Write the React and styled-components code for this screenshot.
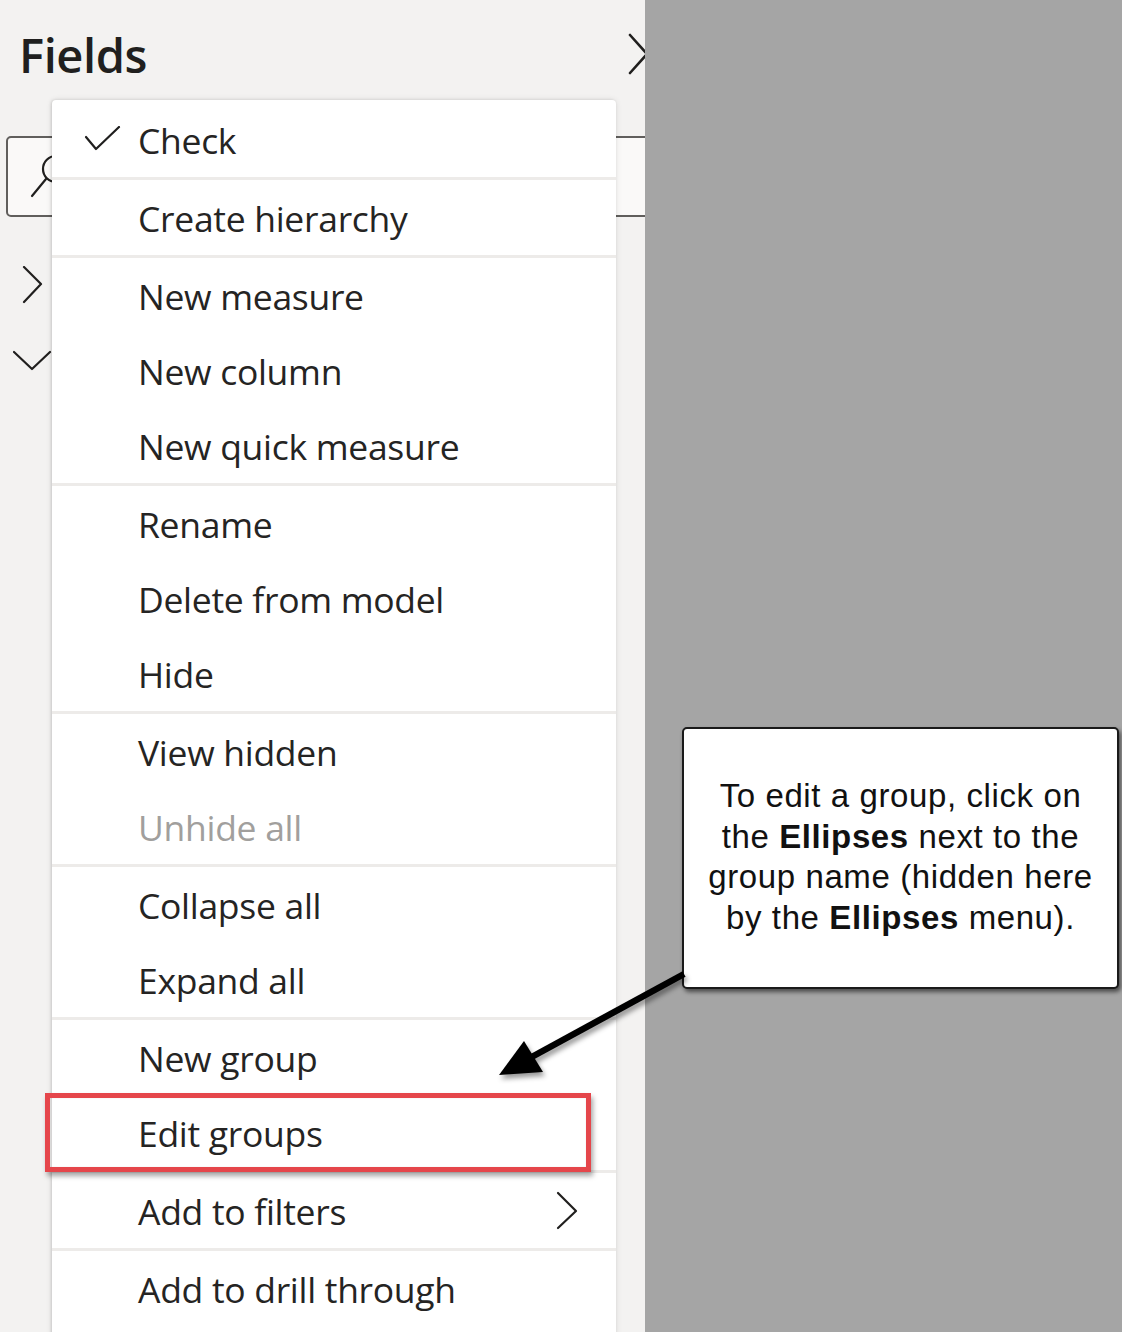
import React from "react";
import styled, { createGlobalStyle } from "styled-components";

const Global = createGlobalStyle`
  html, body { margin: 0; padding: 0; }
  body { width: 1122px; height: 1332px; overflow: hidden; background: #a5a5a5; }
  * { box-sizing: border-box; }
`;

const Page = styled.div`
  position: relative;
  width: 1122px;
  height: 1332px;
  display: grid;
  grid-template-columns: 645px 1fr;
  overflow: hidden;
  font-family: "Open Sans", "Noto Sans", sans-serif;
`;

const Panel = styled.div`
  position: relative;
  background: #f3f2f1;
  overflow: hidden;
  padding: 22px 0 0 19px;
`;

const Header = styled.div`
  display: flex;
  justify-content: space-between;
  align-items: center;
  height: 66px;
`;

const Title = styled.h1`
  margin: 0;
  font-size: 47px;
  font-weight: 600;
  color: #201f1e;
  letter-spacing: -0.4px;
  line-height: 1;
`;

const CloseIcon = styled.svg`
  width: 20px;
  height: 44px;
  margin-right: -3px;
  flex: none;
`;

const SearchBox = styled.div`
  margin: 48px -30px 0 -13px;
  height: 81px;
  border: 2px solid #605e5c;
  border-radius: 5px;
  background: #faf9f8;
  display: flex;
  align-items: center;
  padding-left: 20px;
`;

const Tree = styled.div`
  display: flex;
  flex-direction: column;
  gap: 45px;
  margin-top: 49px;
`;

const TreeIcon = styled.svg`
  width: 40px;
  height: 38px;
  margin-left: ${(p) => p.$offset}px;
`;

const Canvas = styled.div`
  background: #a5a5a5;
`;

const Menu = styled.ul`
  position: absolute;
  left: 52px;
  top: 100px;
  bottom: -20px;
  width: 564px;
  margin: 0;
  padding: 2px 0 0;
  list-style: none;
  background: #fff;
  border-radius: 4px 4px 0 0;
  box-shadow: -1px 0 3px rgba(0, 0, 0, 0.12), 0 0 6px rgba(0, 0, 0, 0.1);
  z-index: 2;
`;

const Separator = styled.li`
  height: 3px;
  background: #edebe9;
`;

const Item = styled.li`
  position: relative;
  height: 75px;
  display: flex;
  align-items: center;
  padding: 0 38px 0 86px;
  font-size: 35.5px;
  letter-spacing: -0.3px;
  color: ${(p) => (p.$disabled ? "#a19f9d" : "#252423")};
`;

const Label = styled.span`
  flex: 1;
  white-space: nowrap;
`;

const CheckIcon = styled.svg`
  position: absolute;
  left: 32px;
  top: 24px;
  width: 38px;
  height: 26px;
`;

const SubIcon = styled.svg`
  width: 22px;
  height: 40px;
  flex: none;
`;

const Highlight = styled.div`
  position: absolute;
  left: -7px;
  right: 25px;
  top: -2px;
  bottom: -2px;
  border: 5px solid #e5464b;
  box-shadow: 2px 4px 5px rgba(0, 0, 0, 0.35), inset 0 0 1px rgba(0,0,0,.2);
  pointer-events: none;
`;

const Callout = styled.div`
  position: absolute;
  left: 682px;
  top: 727px;
  width: 437px;
  height: 262px;
  background: #fff;
  border: 2px solid #1a1a1a;
  border-radius: 5px;
  box-shadow: 2px 3px 4px rgba(0, 0, 0, 0.55);
  display: flex;
  align-items: center;
  justify-content: center;
  text-align: center;
  font-family: "Liberation Sans", Arial, sans-serif;
  font-size: 33px;
  letter-spacing: 0.6px;
  line-height: 40.5px;
  color: #111;
  z-index: 3;
  padding-bottom: 2px;
`;

const CalloutText = styled.p`
  margin: 0;
  white-space: nowrap;
  b { font-weight: 700; }
`;

const ArrowLayer = styled.svg`
  position: absolute;
  left: 0;
  top: 0;
  width: 1122px;
  height: 1332px;
  pointer-events: none;
  z-index: 4;
`;

const groups = [
  [{ label: "Check", checked: true }],
  [{ label: "Create hierarchy" }],
  [{ label: "New measure" }, { label: "New column" }, { label: "New quick measure" }],
  [{ label: "Rename" }, { label: "Delete from model" }, { label: "Hide" }],
  [{ label: "View hidden" }, { label: "Unhide all", disabled: true }],
  [{ label: "Collapse all" }, { label: "Expand all" }],
  [{ label: "New group" }, { label: "Edit groups", highlight: true }],
  [{ label: "Add to filters", sub: true }],
  [{ label: "Add to drill through" }],
];

const stroke = { fill: "none", stroke: "#201f1e", strokeWidth: 2.2, strokeLinecap: "round", strokeLinejoin: "round" };

export default function App() {
  return (
    <>
      <Global />
      <Page>
        <Panel>
          <Header>
            <Title>Fields</Title>
            <CloseIcon viewBox="0 0 20 44">
              <path d="M2 2 L19 21 L2 40" {...stroke} strokeWidth="2.6" />
            </CloseIcon>
          </Header>
          <SearchBox>
            <svg width="44" height="50" viewBox="0 0 44 50">
              <circle cx="28" cy="17" r="13" {...stroke} />
              <path d="M18 27 L4 44" {...stroke} />
            </svg>
          </SearchBox>
          <Tree>
            <TreeIcon $offset={0} viewBox="0 0 40 38">
              <path d="M5 1 L22 18 L5 36" {...stroke} />
            </TreeIcon>
            <TreeIcon $offset={-6} viewBox="0 0 40 38">
              <path d="M1 3 L19 20 L37 3" {...stroke} />
            </TreeIcon>
          </Tree>
        </Panel>
        <Canvas />

        <Menu>
          {groups.map((g, gi) => (
            <React.Fragment key={gi}>
              {gi > 0 && <Separator />}
              {g.map((it) => (
                <Item key={it.label} $disabled={it.disabled}>
                  {it.checked && (
                    <CheckIcon viewBox="0 0 38 26">
                      <path d="M2 11 L12 23 L35 1" {...stroke} />
                    </CheckIcon>
                  )}
                  <Label>{it.label}</Label>
                  {it.sub && (
                    <SubIcon viewBox="0 0 22 40">
                      <path d="M2 2 L20 20 L2 37" {...stroke} />
                    </SubIcon>
                  )}
                  {it.highlight && <Highlight />}
                </Item>
              ))}
            </React.Fragment>
          ))}
        </Menu>

        <Callout>
          <CalloutText>
            To edit a group, click on
            <br />
            the <b>Ellipses</b> next to the
            <br />
            group name (hidden here
            <br />
            by the <b>Ellipses</b> menu).
          </CalloutText>
        </Callout>

        <ArrowLayer viewBox="0 0 1122 1332">
          <defs>
            <filter id="sh" x="-20%" y="-20%" width="140%" height="140%">
              <feDropShadow dx="2" dy="4" stdDeviation="2.5" floodColor="#000" floodOpacity="0.4" />
            </filter>
          </defs>
          <g filter="url(#sh)">
            <path d="M684 974 L528 1059" stroke="#000" strokeWidth="6.5" fill="none" />
            <polygon points="499,1075 524,1041 543,1072" fill="#000" />
          </g>
        </ArrowLayer>
      </Page>
    </>
  );
}
